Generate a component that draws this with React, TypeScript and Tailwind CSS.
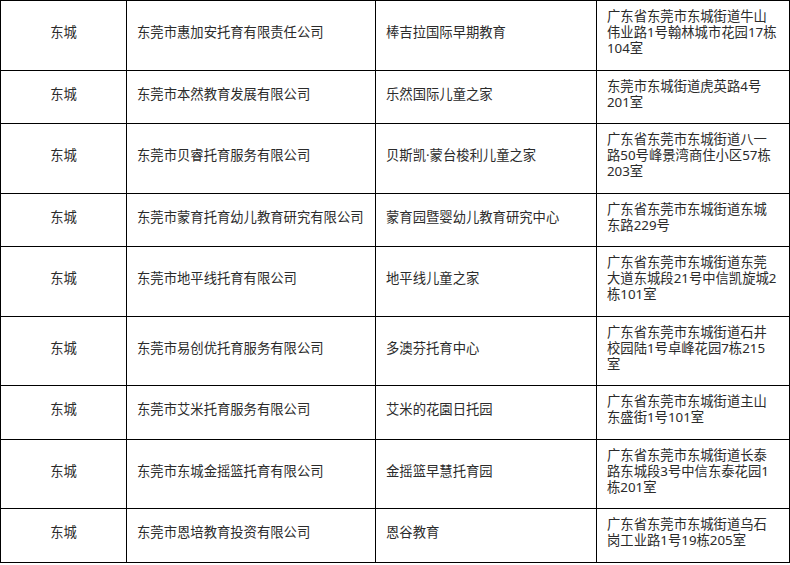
const rows = [
  ["东莞市惠加安托育有限责任公司", "棒吉拉国际早期教育", ["广东省东莞市东城街道牛山", "伟业路1号翰林城市花园17栋", "104室"]],
  ["东莞市本然教育发展有限公司", "乐然国际儿童之家", ["东莞市东城街道虎英路4号", "201室"]],
  ["东莞市贝睿托育服务有限公司", "贝斯凯·蒙台梭利儿童之家", ["广东省东莞市东城街道八一", "路50号峰景湾商住小区57栋", "203室"]],
  ["东莞市蒙育托育幼儿教育研究有限公司", "蒙育园暨婴幼儿教育研究中心", ["广东省东莞市东城街道东城", "东路229号"]],
  ["东莞市地平线托育有限公司", "地平线儿童之家", ["广东省东莞市东城街道东莞", "大道东城段21号中信凯旋城2", "栋101室"]],
  ["东莞市易创优托育服务有限公司", "多澳芬托育中心", ["广东省东莞市东城街道石井", "校园陆1号卓峰花园7栋215", "室"]],
  ["东莞市艾米托育服务有限公司", "艾米的花園日托园", ["广东省东莞市东城街道主山", "东盛街1号101室"]],
  ["东莞市东城金摇篮托育有限公司", "金摇篮早慧托育园", ["广东省东莞市东城街道长泰", "路东城段3号中信东泰花园1", "栋201室"]],
  ["东莞市恩培教育投资有限公司", "恩谷教育", ["广东省东莞市东城街道乌石", "岗工业路1号19栋205室"]],
] as const;

export default function App() {
  const cell = "border border-black pt-[7px] pb-[13.3px] px-[10px] align-middle";
  return (
    <div className="w-[790px] h-[565px] overflow-hidden bg-white">
      <table className="table-fixed border-collapse w-[789px] text-[13.33px] leading-[16.1px] text-[#2b2b2b] font-['Noto_Sans','Noto_Sans_CJK_SC',sans-serif]">
        <colgroup>
          <col className="w-[126px]" />
          <col className="w-[249px]" />
          <col className="w-[221px]" />
          <col className="w-[193px]" />
        </colgroup>
        <tbody>
          {rows.map((r, i) => (
            <tr key={i}>
              <td className={`${cell} text-center`}>东城</td>
              <td className={cell}>{r[0]}</td>
              <td className={cell}>{r[1]}</td>
              <td className={`${cell} whitespace-nowrap`}>
                {r[2].map((line, j) => (
                  <div key={j}>{line}</div>
                ))}
              </td>
            </tr>
          ))}
        </tbody>
      </table>
    </div>
  );
}
